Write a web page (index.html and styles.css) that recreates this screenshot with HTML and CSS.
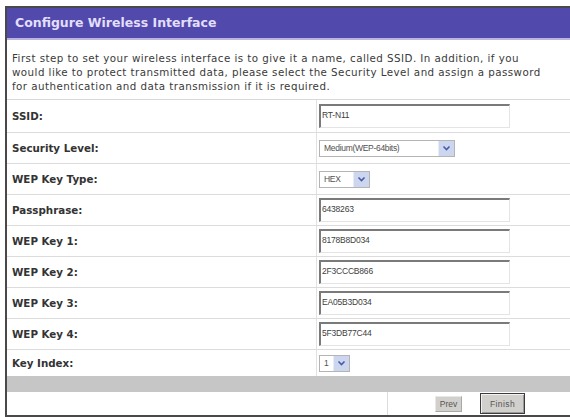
FILE: index.html
```html
<!DOCTYPE html>
<html>
<head>
<meta charset="utf-8">
<link rel="stylesheet" href="styles.css">
</head>
<body>
<div class="frame">
  <div class="header">Configure Wireless Interface</div>
  <div class="desc">First step to set your wireless interface is to give it a name, called SSID. In addition, if you would like to protect transmitted data, please select the Security Level and assign a password for authentication and data transmission if it is required.</div>
  <div class="rows">
    <div class="row tall"><div class="label">SSID:</div><div class="value"><div class="input">RT-N11</div></div></div>
    <div class="row"><div class="label">Security Level:</div><div class="value"><div class="select sel-wide"><span class="sel-text">Medium(WEP-64bits)</span><span class="arrow"><svg width="9" height="6" viewBox="0 0 9 6"><path d="M1.5 1.5 L4.5 4.5 L7.5 1.5" fill="none" stroke="#4a5aa8" stroke-width="1.6"/></svg></span></div></div></div>
    <div class="row"><div class="label">WEP Key Type:</div><div class="value"><div class="select sel-hex"><span class="sel-text">HEX</span><span class="arrow"><svg width="9" height="6" viewBox="0 0 9 6"><path d="M1.5 1.5 L4.5 4.5 L7.5 1.5" fill="none" stroke="#4a5aa8" stroke-width="1.6"/></svg></span></div></div></div>
    <div class="row"><div class="label">Passphrase:</div><div class="value"><div class="input">6438263</div></div></div>
    <div class="row"><div class="label">WEP Key 1:</div><div class="value"><div class="input">8178B8D034</div></div></div>
    <div class="row"><div class="label">WEP Key 2:</div><div class="value"><div class="input">2F3CCCB866</div></div></div>
    <div class="row"><div class="label">WEP Key 3:</div><div class="value"><div class="input">EA05B3D034</div></div></div>
    <div class="row"><div class="label">WEP Key 4:</div><div class="value"><div class="input">5F3DB77C44</div></div></div>
    <div class="row last"><div class="label">Key Index:</div><div class="value"><div class="select sel-idx"><span class="sel-text">1</span><span class="arrow"><svg width="9" height="6" viewBox="0 0 9 6"><path d="M1.5 1.5 L4.5 4.5 L7.5 1.5" fill="none" stroke="#4a5aa8" stroke-width="1.6"/></svg></span></div></div></div>
  </div>
  <div class="graybar"></div>
  <div class="footer">
    <div class="spacer"></div>
    <div class="btn prev">Prev</div>
    <div class="btn finish">Finish</div>
  </div>
</div>
</body>
</html>
```
FILE: styles.css
```css
html, body {
  margin: 0;
  padding: 0;
  background: #ffffff;
}
body {
  overflow: hidden;
  width: 570px;
  height: 417px;
}
.frame {
  margin: 6px 0 0 5px;
  width: 565px;
  height: 407px;
  border: 2px solid #4a4848;
  border-right: none;
  display: flex;
  flex-direction: column;
  background: #fff;
}
.header {
  height: 30px;
  background: #5249ad;
  border-bottom: 2px solid #b9b4e2;
  color: #e2dffa;
  font-family: "DejaVu Sans", Verdana, sans-serif;
  font-weight: bold;
  font-size: 12.5px;
  line-height: 30px;
  padding-left: 8px;
}
.desc {
  padding: 11px 18px 6px 5px;
  font-family: "DejaVu Sans", Verdana, sans-serif;
  font-size: 10.3px;
  letter-spacing: 0.45px;
  line-height: 14px;
  color: #3a3a3a;
  border-bottom: 1px solid #d8d8d8;
}
.rows {
  display: flex;
  flex-direction: column;
}
.row {
  display: grid;
  grid-template-columns: 310px 1fr;
  height: 30px;
  border-bottom: 1px solid #dcdcdc;
}
.row.tall {
  height: 32px;
}
.row.last {
  height: 26px;
  border-bottom: none;
}
.label {
  display: flex;
  align-items: center;
  padding-left: 5px;
  font-family: "DejaVu Sans", Verdana, sans-serif;
  font-weight: bold;
  font-size: 10.3px;
  color: #333;
  border-right: 1px solid #e2e2e2;
}
.value {
  display: flex;
  align-items: center;
  padding-left: 2px;
}
.input {
  box-sizing: border-box;
  width: 191px;
  height: 24px;
  border-top: 2px solid #7a7a7a;
  border-left: 2px solid #7a7a7a;
  border-bottom: 1px solid #e4e4e4;
  border-right: 1px solid #e4e4e4;
  font-family: "Liberation Sans", Arial, sans-serif;
  font-size: 8.5px;
  color: #404040;
  padding: 4px 0 0 1px;
  letter-spacing: -0.2px;
}
.select {
  box-sizing: border-box;
  height: 17px;
  border: 1px solid #b4b4b4;
  display: flex;
  align-items: stretch;
  font-family: "Liberation Sans", Arial, sans-serif;
  font-size: 8.5px;
  color: #505050;
}
.sel-text {
  flex: 1;
  display: flex;
  align-items: center;
  padding-left: 4px;
  letter-spacing: -0.3px;
}
.arrow {
  width: 15px;
  background: #cdd6ef;
  border-left: 1px solid #e8ecf6;
  display: flex;
  align-items: center;
  justify-content: center;
}
.sel-wide { width: 136px; }
.sel-hex { width: 51px; }
.sel-idx { width: 31px; }
.graybar {
  height: 16px;
  background: #c6c6c6;
}
.footer {
  flex: 1;
  display: flex;
  align-items: center;
}
.spacer {
  width: 380px;
  align-self: stretch;
  border-right: 1px solid #dcdcdc;
}
.btn {
  box-sizing: border-box;
  background: #d2d0cc;
  font-family: "Liberation Sans", Arial, sans-serif;
  font-size: 8.5px;
  color: #555;
  display: flex;
  align-items: center;
  justify-content: center;
}
.prev {
  width: 27px;
  height: 16px;
  margin-left: 47px;
  border: 1px solid #e8e8e8;
  border-right-color: #a8a8a8;
  border-bottom-color: #a8a8a8;
}
.finish {
  width: 45px;
  height: 21px;
  margin-left: 18px;
  border: 1px solid #3c3c3c;
  box-shadow: inset 1px 1px 0 #f2f2f2, inset -1px -1px 0 #9a9a9a;
  letter-spacing: 0.4px;
}
```
